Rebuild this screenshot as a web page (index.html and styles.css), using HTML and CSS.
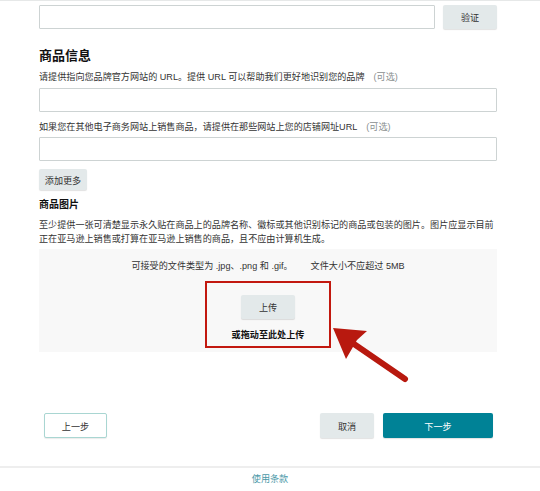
FILE: index.html
```html
<!DOCTYPE html>
<html lang="zh-CN">
<head>
<meta charset="utf-8">
<link rel="stylesheet" href="styles.css">
</head>
<body>
<div class="topline"></div>
<main class="page">
  <div class="verify-row">
    <input class="field field-short" type="text">
    <button class="btn btn-gray btn-verify">验证</button>
  </div>

  <h2 class="title">商品信息</h2>
  <label class="label">请提供指向您品牌官方网站的 URL。提供 URL 可以帮助我们更好地识别您的品牌<span class="optional">(可选)</span></label>
  <input class="field field-full field-a" type="text">
  <label class="label label-b">如果您在其他电子商务网站上销售商品，请提供在那些网站上您的店铺网址URL<span class="optional">(可选)</span></label>
  <input class="field field-full field-b" type="text">
  <button class="btn btn-gray btn-more">添加更多</button>

  <h3 class="subtitle">商品图片</h3>
  <p class="para">至少提供一张可清楚显示永久贴在商品上的品牌名称、徽标或其他识别标记的商品或包装的图片。图片应显示目前正在亚马逊上销售或打算在亚马逊上销售的商品，且不应由计算机生成。</p>

  <section class="upload">
    <p class="upload-note">可接受的文件类型为 .jpg、.png 和 .gif。<span class="size-note">文件大小不应超过 5MB</span></p>
    <div class="highlight">
      <button class="btn btn-gray btn-upload">上传</button>
      <p class="drag">或拖动至此处上传</p>
    </div>
  </section>

  <div class="actions">
    <button class="btn btn-outline">上一步</button>
    <div class="actions-right">
      <button class="btn btn-gray btn-cancel">取消</button>
      <button class="btn btn-primary">下一步</button>
    </div>
  </div>
</main>
<footer class="footer">
  <a class="footer-link">使用条款</a>
</footer>

<svg class="arrow" width="540" height="491" viewBox="0 0 540 491">
  <line x1="354" y1="344" x2="405" y2="379" stroke="#b8190f" stroke-width="6" stroke-linecap="round"/>
  <polygon points="333,328 367,331 357,340 346,359" fill="#b8190f"/>
</svg>
</body>
</html>
```

FILE: styles.css
```css
* { box-sizing: border-box; }
html, body { margin: 0; padding: 0; background: #fff; }
body {
  position: relative;
  width: 540px;
  height: 491px;
  overflow: hidden;
  font-family: "Liberation Sans", "Noto Sans CJK SC", sans-serif;
  color: #222;
  font-size: 9.1px;
}
.topline { height: 1px; background: #e6e8e8; }
.page {
  width: 458px;
  margin-left: 39px;
  display: flex;
  flex-direction: column;
}
.verify-row {
  display: flex;
  gap: 8px;
  margin-top: 4px;
}
.field {
  height: 24px;
  border: 1px solid #cdd3d3;
  border-radius: 1px;
  background: #fff;
  padding: 0 6px;
  margin: 0;
  outline: none;
}
.field-short { width: 396px; }
.field-full { width: 458px; }
.btn {
  font-family: "Liberation Sans", "Noto Sans CJK SC", sans-serif;
  font-size: 9.1px;
  border: none;
  border-radius: 2px;
  padding: 0;
  margin: 0;
  cursor: pointer;
  color: #333;
}
.btn-gray {
  background: #e3e9ea;
  box-shadow: 0 1px 1px rgba(0,0,0,0.12);
}
.btn-verify { width: 54px; height: 24px; }
.title {
  font-size: 13px;
  font-weight: bold;
  line-height: 16px;
  margin: 19px 0 0;
  color: #111;
}
.label {
  display: block;
  line-height: 12px;
  margin-top: 7px;
  color: #333;
}
.optional { color: #8a8f8f; margin-left: 9px; }
.field-a { margin-top: 5px; }
.label-b { margin-top: 9px; }
.field-b { margin-top: 4px; height: 24px; }
.btn-more {
  width: 48px;
  height: 21px;
  margin-top: 8px;
  align-self: flex-start;
}
.subtitle {
  font-size: 10px;
  font-weight: bold;
  line-height: 13px;
  margin: 8px 0 0;
  color: #111;
}
.para {
  line-height: 14px;
  margin: 7px 0 0;
  color: #333;
}
.upload {
  margin-top: 3px;
  height: 103px;
  background: #f8f8f8;
  display: flex;
  flex-direction: column;
  align-items: center;
  padding-top: 11px;
}
.upload-note {
  margin: 0;
  line-height: 12px;
  color: #333;
}
.size-note { margin-left: 18px; }
.highlight {
  margin-top: 9px;
  width: 126px;
  height: 67px;
  border: 2px solid #c2180f;
  display: flex;
  flex-direction: column;
  align-items: center;
  padding-top: 12px;
}
.btn-upload { width: 54px; height: 24px; }
.drag {
  margin: 10px 0 0;
  font-weight: bold;
  line-height: 12px;
  color: #111;
}
.actions {
  margin-top: 61px;
  padding: 0 4px 0 5px;
  display: flex;
  justify-content: space-between;
}
.actions-right { display: flex; gap: 9px; }
.btn-outline {
  width: 63px;
  height: 25px;
  background: #fff;
  border: 1px solid #a9d6d2;
  box-shadow: 0 1px 1px rgba(0,0,0,0.08);
}
.btn-cancel { width: 54px; height: 25px; }
.btn-primary {
  width: 110px;
  height: 25px;
  background: #008296;
  color: #fff;
  box-shadow: 0 1px 1px rgba(0,0,0,0.12);
}
.footer {
  margin-top: 28px;
  border-top: 2px solid #eeeeee;
  text-align: center;
  padding-top: 5px;
}
.footer-link {
  color: #4a98a8;
  font-size: 9.1px;
  line-height: 12px;
}
.arrow {
  position: absolute;
  top: 0;
  left: 0;
  pointer-events: none;
}
```
